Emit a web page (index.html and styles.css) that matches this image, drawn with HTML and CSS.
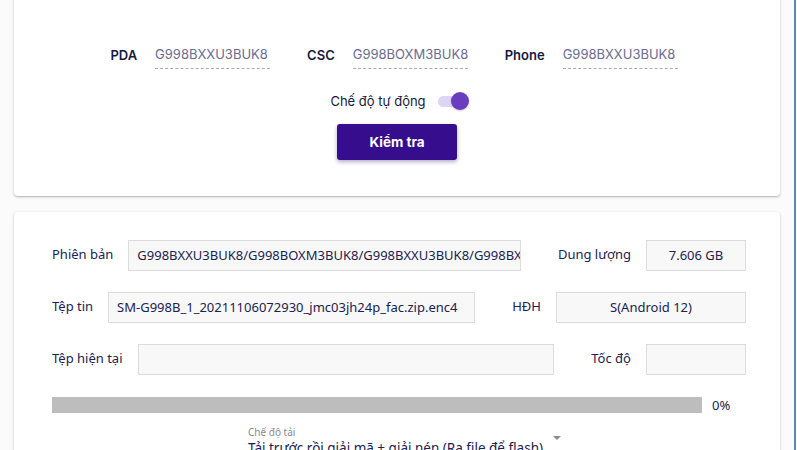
FILE: index.html
```html
<!DOCTYPE html>
<html>
  <head>
    <title>Firmware</title>
    <link rel="stylesheet" href="styles.css">
  </head>
  <body>
    <div id="app">
      <div class="card card-check">
        <div class="fw-row">
          <label class="fw-label">PDA</label>
          <input class="fw-input" type="text" value="G998BXXU3BUK8" />
          <label class="fw-label">CSC</label>
          <input class="fw-input" type="text" value="G998BOXM3BUK8" />
          <label class="fw-label">Phone</label>
          <input class="fw-input" type="text" value="G998BXXU3BUK8" />
        </div>
        <div class="auto-row">
          <span>Chế độ tự động</span>
          <div class="switch">
            <div class="switch-track"></div>
            <div class="switch-thumb"></div>
          </div>
        </div>
        <button class="check-btn">Kiểm tra</button>
      </div>

      <div class="card card-info">
        <div class="info-row">
          <span class="info-label">Phiên bản</span>
          <div class="info-field grow">G998BXXU3BUK8/G998BOXM3BUK8/G998BXXU3BUK8/G998BXXU3BUK8</div>
          <span class="info-label side">Dung lượng</span>
          <div class="info-field center small">7.606 GB</div>
        </div>
        <div class="info-row">
          <span class="info-label">Tệp tin</span>
          <div class="info-field grow">SM-G998B_1_20211106072930_jmc03jh24p_fac.zip.enc4</div>
          <span class="info-label side">HĐH</span>
          <div class="info-field center wide">S(Android 12)</div>
        </div>
        <div class="info-row">
          <span class="info-label">Tệp hiện tại</span>
          <div class="info-field grow"></div>
          <span class="info-label side">Tốc độ</span>
          <div class="info-field small"></div>
        </div>
        <div class="progress-row">
          <div class="progress"><div class="progress-fill" style="width: 0%"></div></div>
          <span class="progress-text">0%</span>
        </div>
        <div class="mode-select">
          <span class="mode-caption">Chế độ tải</span>
          <div class="mode-value">
            <span>Tải trước rồi giải mã + giải nén (Ra file để flash)</span>
            <span class="mode-arrow"></span>
          </div>
        </div>
      </div>
    </div>
  </body>
</html>
```

FILE: styles.css
```css
body {
  margin: 0;
  background-color: #ffffff;
  overflow: hidden;
}

#app {
  display: flow-root;
  width: 766px;
  min-height: 450px;
  padding: 0 14px;
  background-color: #fbfbfc;
  border-right: 2px solid #5b8aa2;
}

.card {
  background-color: #ffffff;
  border-radius: 4px;
  box-shadow: 0 1px 3px rgba(0, 0, 0, 0.22), 0 1px 1px rgba(0, 0, 0, 0.1);
}

/* top card */
.card-check {
  margin-top: -8px;
  padding: 48px 0 36px;
  display: flex;
  flex-direction: column;
  align-items: center;
  font-family: Inter, "Noto Sans", sans-serif;
}

.fw-row {
  display: flex;
  align-items: center;
  height: 29px;
  margin-left: -6px;
}

.fw-label {
  font-size: 13px;
  font-weight: 600;
  color: #16193f;
  margin-right: 18px;
}

.fw-input {
  width: 115px;
  height: 28px;
  padding: 0;
  margin-right: 37px;
  border: none;
  border-bottom: 1px dashed #a9a9b8;
  font-family: Inter, sans-serif;
  font-size: 13px;
  color: #6c6b91;
  background: transparent;
  outline: none;
}

.fw-input:last-child {
  margin-right: 0;
}

.auto-row {
  display: flex;
  align-items: center;
  margin-top: 20px;
  height: 24px;
  font-size: 13px;
  color: #16193f;
  margin-left: 5px;
}

.switch {
  position: relative;
  width: 32px;
  height: 20px;
  margin-left: 11px;
}

.switch-track {
  position: absolute;
  left: 1px;
  top: 5px;
  width: 28px;
  height: 11px;
  border-radius: 6px;
  background-color: #ddd5f3;
}

.switch-thumb {
  position: absolute;
  right: 0;
  top: 1px;
  width: 18px;
  height: 18px;
  border-radius: 50%;
  background-color: #6a3dc0;
  box-shadow: 0 1px 2px rgba(0, 0, 0, 0.2);
}

.check-btn {
  margin-top: 11px;
  width: 120px;
  height: 36px;
  border: none;
  border-radius: 3px;
  background-color: #360d8c;
  color: #ffffff;
  font-family: Inter, sans-serif;
  font-size: 13.5px;
  font-weight: 700;
  box-shadow: 0 2px 4px rgba(40, 10, 100, 0.35);
  cursor: pointer;
}

/* info card */
.card-info {
  margin-top: 16px;
  padding: 28px 34px 20px 38px;
  font-family: "Noto Sans", sans-serif;
  height: 260px;
}

.info-row {
  display: flex;
  align-items: center;
  margin-bottom: 21px;
}

.info-label {
  font-size: 13px;
  color: #1c2250;
  margin-right: 15px;
  white-space: nowrap;
  position: relative;
  top: -2px;
}

.info-label.side {
  margin-left: 37px;
}

.info-field {
  height: 29px;
  line-height: 29px;
  padding: 0 8px;
  border: 1px solid #dcdcdc;
  background-color: #f8f8f8;
  font-size: 13px;
  color: #1c2250;
  white-space: nowrap;
  overflow: hidden;
  box-sizing: content-box;
}

.info-field.grow {
  flex: 1;
  min-width: 0;
}

.info-field.center {
  text-align: center;
}

.info-field.small {
  width: 82px;
}

.info-field.wide {
  width: 172px;
}

.progress-row {
  display: flex;
  align-items: center;
}

.progress {
  width: 650px;
  height: 16px;
  background-color: #bdbdbd;
}

.progress-fill {
  height: 100%;
  background-color: #4a2a9c;
}

.progress-text {
  margin-left: 10px;
  font-size: 13px;
  color: #1c2250;
}

.mode-select {
  margin: 12px 0 0 196px;
  display: flex;
  flex-direction: column;
}

.mode-caption {
  font-size: 10px;
  color: #8a8a8a;
  line-height: 13px;
}

.mode-value {
  display: flex;
  align-items: flex-start;
  font-size: 13.5px;
  color: #1c2250;
  line-height: 18px;
}

.mode-arrow {
  width: 0;
  height: 0;
  margin: 0 0 0 10px;
  border-left: 4px solid transparent;
  border-right: 4px solid transparent;
  border-top: 4px solid #8a8a8a;
  position: relative;
  top: -3px;
}
```
